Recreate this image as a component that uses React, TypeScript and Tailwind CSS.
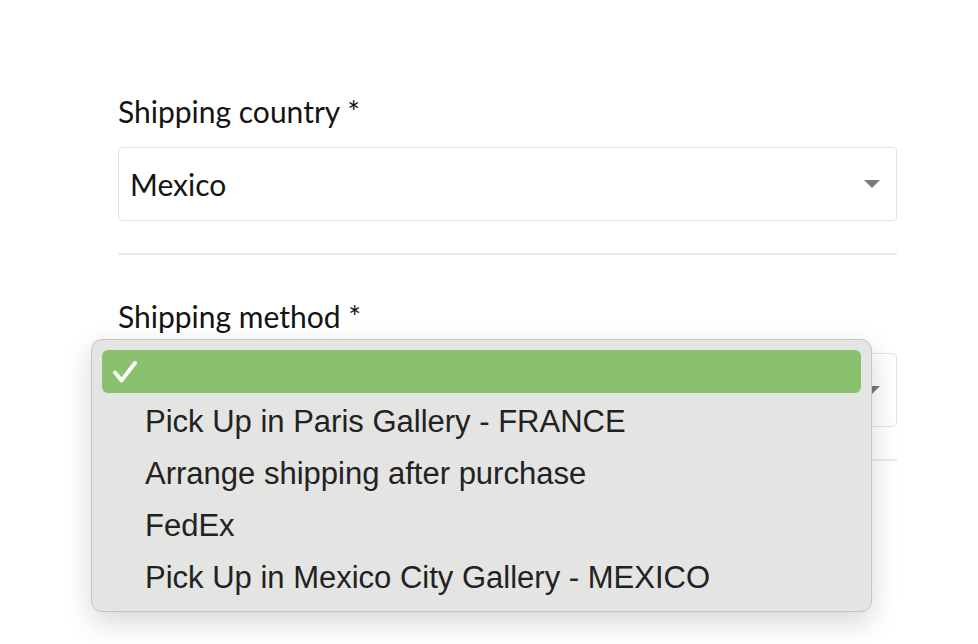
import React from 'react';

const methods = [
    'Pick Up in Paris Gallery - FRANCE',
    'Arrange shipping after purchase',
    'FedEx',
    'Pick Up in Mexico City Gallery - MEXICO',
];

const Caret = () => (
    <svg width="16" height="9" viewBox="0 0 16 9" className="shrink-0">
        <path d="M0 0 H16 L8 8 Z" fill="#7b7b7b" />
    </svg>
);

export default function App() {
    return (
        <div className="min-h-[644px] w-[978px] bg-white" style={{ fontFamily: 'Lato, "Open Sans", sans-serif' }}>
            <div className="ml-[118px] w-[779px] pt-[95px]">
                {/* Country */}
                <label className="block text-[30px] leading-[32px] text-[#141414]">Shipping country *</label>
                <div className="mt-[20px] flex h-[74px] items-center justify-between rounded-[4px] border border-[#e3e3e3] pl-[11px] pr-[16px]">
                    <span className="text-[30px] text-[#141414]">Mexico</span>
                    <Caret />
                </div>

                <div className="mt-[32px] h-[2px] bg-[#ebebeb]" />

                {/* Method */}
                <label className="mt-[45px] block text-[30px] leading-[32px] text-[#141414]">Shipping method *</label>
                <div className="relative mt-[21px]">
                    <div className="flex h-[74px] items-center justify-end rounded-[4px] border border-[#e3e3e3] pr-[16px]">
                        <Caret />
                    </div>

                    {/* open native menu */}
                    <div
                        className="absolute -left-[27px] -top-[14px] w-[781px] rounded-[11px] border border-[#c4c4c4] bg-[#e4e4e3] p-[10px] shadow-[0_10px_28px_rgba(0,0,0,0.16)]"
                        style={{ fontFamily: '"Liberation Sans", Arial, sans-serif' }}
                    >
                        <div className="flex flex-col gap-[9px]">
                            <div className="flex h-[43px] items-center rounded-[6px] bg-[#8ac16e] pl-[11px]">
                                <svg width="24" height="22" viewBox="0 0 24 22">
                                    <path d="M2 11.5 L8.5 19.5 L22 2" fill="none" stroke="white" strokeWidth="3.8" strokeLinecap="round" strokeLinejoin="round" />
                                </svg>
                            </div>
                            {methods.map(m => (
                                <div key={m} className="flex h-[43px] items-center pl-[43px] text-[31px] leading-[36px] text-[#222]">
                                    <span className="-mt-[3px]">{m}</span>
                                </div>
                            ))}
                        </div>
                    </div>
                </div>

                <div className="mt-[32px] h-[2px] bg-[#ebebeb]" />
            </div>
        </div>
    );
}
